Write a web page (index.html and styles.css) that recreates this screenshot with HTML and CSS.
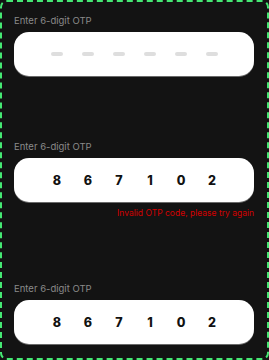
FILE: index.html
```html
<!DOCTYPE html>
<html>
<head>
<meta charset="utf-8">
<link rel="stylesheet" href="styles.css">
</head>
<body>
<div class="frame">
  <div class="field">
    <div class="label">Enter 6-digit OTP</div>
    <div class="otp">
      <span class="dash"></span><span class="dash"></span><span class="dash"></span><span class="dash"></span><span class="dash"></span><span class="dash"></span>
    </div>
  </div>
  <div class="field">
    <div class="label">Enter 6-digit OTP</div>
    <div class="otp">
      <span class="digit">8</span><span class="digit">6</span><span class="digit">7</span><span class="digit">1</span><span class="digit">0</span><span class="digit">2</span>
    </div>
    <div class="error">Invalid OTP code, please try again</div>
  </div>
  <div class="field">
    <div class="label">Enter 6-digit OTP</div>
    <div class="otp">
      <span class="digit">8</span><span class="digit">6</span><span class="digit">7</span><span class="digit">1</span><span class="digit">0</span><span class="digit">2</span>
    </div>
  </div>
</div>
</body>
</html>
```

FILE: styles.css
```css
html, body {
  margin: 0;
  padding: 0;
  background: #131313;
}
.frame {
  box-sizing: border-box;
  width: 269px;
  height: 360px;
  border: 2px dashed #45e873;
  border-radius: 7px;
  background: #131313;
  padding: 13px 13px 14px 12px;
  display: flex;
  flex-direction: column;
  justify-content: space-between;
  font-family: Inter, "Liberation Sans", sans-serif;
}
.field {
  display: flex;
  flex-direction: column;
}
.label {
  color: #8a8a8a;
  font-size: 9.5px;
  line-height: 12px;
  margin-bottom: 5px;
}
.otp {
  height: 44px;
  background: #ffffff;
  border-radius: 15px;
  box-shadow: 0 1px 0 #6a6a6a;
  display: flex;
  align-items: center;
  padding-left: 37px;
  gap: 19px;
}
.dash {
  width: 12px;
  height: 4px;
  border-radius: 2px;
  background: #dedede;
}
.digit {
  width: 12px;
  text-align: center;
  font-size: 12.5px;
  font-weight: 800;
  color: #111;
}
.error {
  align-self: flex-end;
  color: #d40000;
  font-size: 8.5px;
  line-height: 10px;
  margin-top: 6px;
}
```
